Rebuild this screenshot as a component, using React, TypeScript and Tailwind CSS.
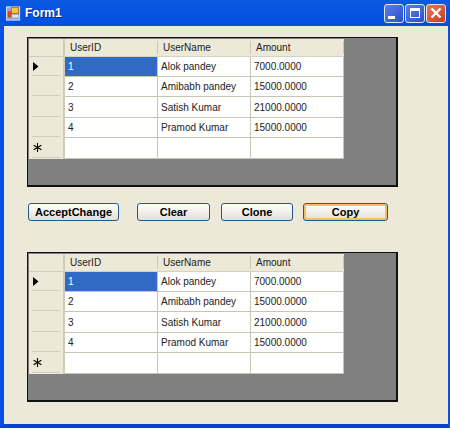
import React from 'react';

const rows = [
  { id: '1', name: 'Alok pandey', amount: '7000.0000', height: 'h-[20px]' },
  { id: '2', name: 'Amibabh pandey', amount: '15000.0000', height: 'h-[20px]' },
  { id: '3', name: 'Satish Kumar', amount: '21000.0000', height: 'h-[21px]' },
  { id: '4', name: 'Pramod Kumar', amount: '15000.0000', height: 'h-[20px]' },
];

function HeaderCell({ label }: { label: string }) {
  return (
    <div className="w-[93px] h-full flex items-center justify-between pl-[5px] border-b border-[#d6d2c2]">
      {label}
      <div className="w-px h-[13px] bg-[#cbc7b6]" />
    </div>
  );
}

function Cell({ text, selected }: { text: string; selected?: boolean }) {
  return (
    <div
      className={`w-[93px] h-full flex items-center pl-[3px] border-r border-b border-[#c8c5b4] ${
        selected ? 'bg-[#316ac5] text-white' : 'bg-white text-[#222]'
      }`}
    >
      {text}
    </div>
  );
}

function RowHeader({ children }: { children?: React.ReactNode }) {
  return (
    <div className="w-[36px] h-full flex flex-col bg-[#ece9d8] border-r-2 border-[#d0ccbb]">
      <div className="flex-1 flex items-center pl-[4px]">{children}</div>
      <div className="h-px mx-[3px] mb-px bg-[#d3cfbe]" />
    </div>
  );
}

function DataGrid() {
  return (
    <div className="w-[371px] h-[150px] bg-[#808080] border border-[#111] border-r-2 border-b-2 pl-px pt-px">
      <div className="w-[315px] text-[10px] text-[#222]">
        <div className="flex h-[18px] bg-[#ece9d8]">
          <div className="w-[36px] h-full border-r-2 border-b border-[#d0ccbb]" />
          <HeaderCell label="UserID" />
          <HeaderCell label="UserName" />
          <HeaderCell label="Amount" />
        </div>
        {rows.map((row, i) => (
          <div key={row.id} className={`flex ${row.height}`}>
            <RowHeader>
              {i === 0 && (
                <svg width="6" height="9" viewBox="0 0 6 9">
                  <path d="M0 0 L5.5 4.5 L0 9 Z" fill="#000" />
                </svg>
              )}
            </RowHeader>
            <Cell text={row.id} selected={i === 0} />
            <Cell text={row.name} />
            <Cell text={row.amount} />
          </div>
        ))}
        <div className="flex h-[21px]">
          <RowHeader>
            <svg width="9" height="9" viewBox="0 0 9 9" stroke="#000" strokeWidth="1.1">
              <path d="M4.5 0 V9 M0.6 2.2 L8.4 6.8 M0.6 6.8 L8.4 2.2" />
            </svg>
          </RowHeader>
          <Cell text="" />
          <Cell text="" />
          <Cell text="" />
        </div>
      </div>
    </div>
  );
}

function XpButton({ label, width, active }: { label: string; width: string; active?: boolean }) {
  return (
    <div
      className={`${width} h-[18px] rounded-[3px] border border-[#235a8c] flex items-center justify-center text-[11px] font-bold text-black bg-gradient-to-b from-white to-[#e3e0d3] ${
        active ? 'shadow-[inset_0_0_0_2px_#f5c060]' : ''
      }`}
    >
      {label}
    </div>
  );
}

function WinControl({ children, red }: { children: React.ReactNode; red?: boolean }) {
  return (
    <div
      className={`w-[20px] h-[19px] rounded-[3px] border border-[#dfe6f8] flex items-center justify-center ${
        red ? 'bg-gradient-to-br from-[#e8795a] to-[#c8391a]' : 'bg-gradient-to-br from-[#5b7fe8] to-[#2a4fc8]'
      }`}
    >
      {children}
    </div>
  );
}

export default function App() {
  return (
    <div className="w-[450px] h-[430px] bg-white overflow-hidden font-['Liberation_Sans',sans-serif]">
      <div className="h-[428px] flex flex-col">
        <div className="h-[26px] flex items-center pl-[6px] pr-[4px] bg-gradient-to-b from-[#0a5ae0] via-[#0553e3] to-[#0250dc]">
          <svg width="15" height="15" viewBox="0 0 17 17">
            <rect x="0.5" y="1" width="15" height="15" fill="#8fa8d8" stroke="#dfe6f5" />
            <rect x="6" y="1.5" width="8" height="7" fill="#f4c63c" stroke="#a86a10" />
            <rect x="2" y="6" width="4" height="7" fill="#d8402a" />
            <rect x="7" y="10" width="7" height="3" fill="#dfe6f5" />
          </svg>
          <span className="ml-[4px] text-[12px] font-bold text-white [text-shadow:1px_1px_0_#0a2a8a]">Form1</span>
          <div className="ml-auto flex gap-px">
            <WinControl>
              <div className="w-[7px] h-[3px] bg-white mt-[9px] mr-[6px]" />
            </WinControl>
            <WinControl>
              <div className="w-[10px] h-[10px] border border-white border-t-[3px]" />
            </WinControl>
            <WinControl red>
              <svg width="12" height="12" viewBox="0 0 12 12" stroke="#fff" strokeWidth="2.4">
                <path d="M1.5 1.5 L10.5 10.5 M10.5 1.5 L1.5 10.5" />
              </svg>
            </WinControl>
          </div>
        </div>
        <div className="flex-1 bg-[#ece9d8] border-l-4 border-l-[#0a50e0] border-r-2 border-r-[#0a50e0] border-b-4 border-b-[#0a40d8] pl-[23px] pt-[11px]">
          <DataGrid />
          <div className="flex mt-[16px] ml-px">
            <XpButton label="AcceptChange" width="w-[91px]" />
            <div className="ml-[18px]">
              <XpButton label="Clear" width="w-[73px]" />
            </div>
            <div className="ml-[11px]">
              <XpButton label="Clone" width="w-[72px]" />
            </div>
            <div className="ml-[10px]">
              <XpButton label="Copy" width="w-[85px]" active />
            </div>
          </div>
          <div className="mt-[31px]">
            <DataGrid />
          </div>
        </div>
      </div>
    </div>
  );
}
